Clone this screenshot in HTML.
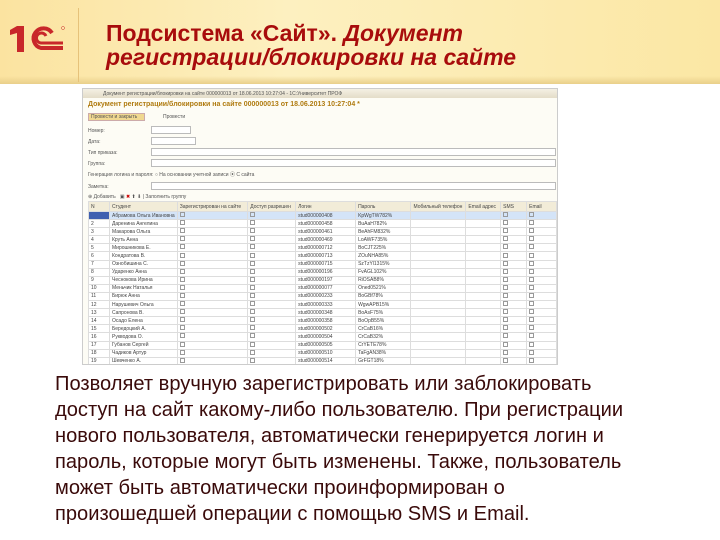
<!DOCTYPE html><html><head><meta charset="utf-8"><style>
*{margin:0;padding:0;box-sizing:border-box}
body{width:720px;height:540px;overflow:hidden;background:#fff;font-family:"Liberation Sans",sans-serif;position:relative}
.hdr{position:absolute;left:0;top:0;width:720px;height:84px;background:linear-gradient(90deg,#fbe3a0 0%,#fdf0c0 40%,#fbe7a4 100%)}
.hdr:after{content:"";position:absolute;left:0;right:0;bottom:0;height:8px;background:linear-gradient(#f3d88f00,#e9cf8a)}
.sep{position:absolute;left:78px;top:8px;width:1px;height:74px;background:#e6c27a}
.title{position:absolute;left:106px;top:21px;color:#a80c0c;font-size:23px;font-weight:bold;line-height:24px;white-space:nowrap}
.title i{font-style:italic}
.ss{position:absolute;left:82px;top:88px;width:476px;height:277px;background:#fdfcf5;border:1px solid #ccc;font-size:5px;color:#555;overflow:hidden}
.ss div{position:absolute}
.txt{position:absolute;left:55px;top:371px;font-size:20.1px;line-height:26px;color:#3a0a0a;white-space:nowrap}
table{position:absolute;left:5px;top:112px;border-collapse:collapse;font-size:5px;color:#444}
td{height:8.1px;border:1px solid #ddd;padding:0 2px;white-space:nowrap;overflow:hidden;background:#fff}
tr.h td{background:#f2ecd8;height:10px}
.cb{display:inline-block;width:5px;height:5px;border:1px solid #999}
</style></head><body>
<div class="hdr"></div><div class="sep"></div>
<svg style="position:absolute;left:8px;top:24px" width="60" height="30" viewBox="0 0 60 30">
<path d="M2 6 L9 2 H16 V28 H9 V9 L2 11Z" fill="#c8272a"/>
<path d="M44 9 A10 10 0 1 0 33 24 H55" fill="none" stroke="#c8272a" stroke-width="4"/>
<path d="M38 12 A5 5 0 1 0 33 19 H55" fill="none" stroke="#c8272a" stroke-width="3"/>
<circle cx="55" cy="4" r="1.5" fill="none" stroke="#c8272a" stroke-width=".5"/>
</svg>
<div class="title">Подсистема «Сайт». <i>Документ<br>регистрации/блокировки на сайте</i></div>
<div class="ss">
<div style="left:0;top:0;width:476px;height:9px;background:linear-gradient(#f4f0e4,#e4ddc8)"></div>
<div style="left:20px;top:2px">Документ регистрации/блокировки на сайте 000000013 от 18.06.2013 10:27:04 - 1С:Университет ПРОФ</div>
<div style="left:5px;top:12px;font-size:7px;font-weight:bold;color:#b07b10">Документ регистрации/блокировки на сайте 000000013 от 18.06.2013 10:27:04 *</div>
<div style="left:5px;top:24px;width:57px;height:8px;background:#f0d890;border:1px solid #caa;"></div>
<div style="left:8px;top:25px">Провести и закрыть</div><div style="left:80px;top:25px">Провести</div>
<div style="left:5px;top:39px">Номер:</div><div style="left:68px;top:37px;width:40px;height:8px;border:1px solid #bbb;background:#fff"></div>
<div style="left:5px;top:50px">Дата:</div><div style="left:68px;top:48px;width:45px;height:8px;border:1px solid #bbb;background:#fff"></div>
<div style="left:5px;top:61px">Тип приказа:</div><div style="left:68px;top:59px;width:405px;height:8px;border:1px solid #bbb;background:#fff"></div>
<div style="left:5px;top:72px">Группа:</div><div style="left:68px;top:70px;width:405px;height:8px;border:1px solid #bbb;background:#fff"></div>
<div style="left:5px;top:82px">Генерация логина и пароля: ○ На основании учетной записи ⦿ С сайта</div>
<div style="left:5px;top:95px">Заметка:</div><div style="left:68px;top:93px;width:405px;height:8px;border:1px solid #bbb;background:#fff"></div>
<div style="left:5px;top:105px">⊕ Добавить &nbsp; ▣ <span style="color:#c00">✖</span> ⬆ ⬇ | Заполнить группу</div>
<table>
<tr class="h"><td style="width:22px">N</td><td style="width:62px">Студент</td><td style="width:71px">Зарегистрирован на сайте</td><td style="width:48px">Доступ разрешен</td><td style="width:62px">Логин</td><td style="width:57px">Пароль</td><td style="width:55px">Мобильный телефон</td><td style="width:35px">Email адрес</td><td style="width:27px">SMS</td><td style="width:31px">Email</td></tr>
<tr><td style="background:#4060b0"></td><td style="background:#d4e4f8">Абрамова Ольга Ивановна</td><td style="background:#d4e4f8"><span class="cb"></span></td><td style="background:#d4e4f8"><span class="cb"></span></td><td style="background:#d4e4f8">stud000000408</td><td style="background:#d4e4f8">KpWgTW782%</td><td style="background:#d4e4f8"></td><td style="background:#d4e4f8"></td><td style="background:#d4e4f8"><span class="cb"></span></td><td style="background:#d4e4f8"><span class="cb"></span></td></tr>
<tr><td>2</td><td>Даренина Ангелина</td><td><span class="cb"></span></td><td><span class="cb"></span></td><td>stud000000458</td><td>BuAaH782%</td><td></td><td></td><td><span class="cb"></span></td><td><span class="cb"></span></td></tr>
<tr><td>3</td><td>Макарова Ольга</td><td><span class="cb"></span></td><td><span class="cb"></span></td><td>stud000000461</td><td>BeAhFM832%</td><td></td><td></td><td><span class="cb"></span></td><td><span class="cb"></span></td></tr>
<tr><td>4</td><td>Круть Анна</td><td><span class="cb"></span></td><td><span class="cb"></span></td><td>stud000000469</td><td>LoAWF735%</td><td></td><td></td><td><span class="cb"></span></td><td><span class="cb"></span></td></tr>
<tr><td>5</td><td>Мирошникова Е.</td><td><span class="cb"></span></td><td><span class="cb"></span></td><td>stud000000712</td><td>BoCJT225%</td><td></td><td></td><td><span class="cb"></span></td><td><span class="cb"></span></td></tr>
<tr><td>6</td><td>Кондратова В.</td><td><span class="cb"></span></td><td><span class="cb"></span></td><td>stud000000713</td><td>ZOuNHA85%</td><td></td><td></td><td><span class="cb"></span></td><td><span class="cb"></span></td></tr>
<tr><td>7</td><td>Ознобишина С.</td><td><span class="cb"></span></td><td><span class="cb"></span></td><td>stud000000715</td><td>SzTzYl1315%</td><td></td><td></td><td><span class="cb"></span></td><td><span class="cb"></span></td></tr>
<tr><td>8</td><td>Ударенко Анна</td><td><span class="cb"></span></td><td><span class="cb"></span></td><td>stud000000196</td><td>FvAGL102%</td><td></td><td></td><td><span class="cb"></span></td><td><span class="cb"></span></td></tr>
<tr><td>9</td><td>Чеснокова Ирина</td><td><span class="cb"></span></td><td><span class="cb"></span></td><td>stud000000197</td><td>RiOSAB8%</td><td></td><td></td><td><span class="cb"></span></td><td><span class="cb"></span></td></tr>
<tr><td>10</td><td>Меньчик Наталья</td><td><span class="cb"></span></td><td><span class="cb"></span></td><td>stud000000077</td><td>Oned0521%</td><td></td><td></td><td><span class="cb"></span></td><td><span class="cb"></span></td></tr>
<tr><td>11</td><td>Бирюк Анна</td><td><span class="cb"></span></td><td><span class="cb"></span></td><td>stud000000233</td><td>BoGBf78%</td><td></td><td></td><td><span class="cb"></span></td><td><span class="cb"></span></td></tr>
<tr><td>12</td><td>Нарушевич Ольга</td><td><span class="cb"></span></td><td><span class="cb"></span></td><td>stud000000333</td><td>WgwAPB15%</td><td></td><td></td><td><span class="cb"></span></td><td><span class="cb"></span></td></tr>
<tr><td>13</td><td>Сапронова В.</td><td><span class="cb"></span></td><td><span class="cb"></span></td><td>stud000000348</td><td>BoAsF75%</td><td></td><td></td><td><span class="cb"></span></td><td><span class="cb"></span></td></tr>
<tr><td>14</td><td>Осадо Елена</td><td><span class="cb"></span></td><td><span class="cb"></span></td><td>stud000000358</td><td>BoOpB55%</td><td></td><td></td><td><span class="cb"></span></td><td><span class="cb"></span></td></tr>
<tr><td>15</td><td>Бередоцкий А.</td><td><span class="cb"></span></td><td><span class="cb"></span></td><td>stud000000502</td><td>CrCaB16%</td><td></td><td></td><td><span class="cb"></span></td><td><span class="cb"></span></td></tr>
<tr><td>16</td><td>Рукводова О.</td><td><span class="cb"></span></td><td><span class="cb"></span></td><td>stud000000504</td><td>CrCaB32%</td><td></td><td></td><td><span class="cb"></span></td><td><span class="cb"></span></td></tr>
<tr><td>17</td><td>Губанов Сергей</td><td><span class="cb"></span></td><td><span class="cb"></span></td><td>stud000000505</td><td>CrYETE78%</td><td></td><td></td><td><span class="cb"></span></td><td><span class="cb"></span></td></tr>
<tr><td>18</td><td>Чадиков Артур</td><td><span class="cb"></span></td><td><span class="cb"></span></td><td>stud000000510</td><td>TaFgAN38%</td><td></td><td></td><td><span class="cb"></span></td><td><span class="cb"></span></td></tr>
<tr><td>19</td><td>Шевченко А.</td><td><span class="cb"></span></td><td><span class="cb"></span></td><td>stud000000514</td><td>GrFGT18%</td><td></td><td></td><td><span class="cb"></span></td><td><span class="cb"></span></td></tr>
</table>
</div>
<div class="txt">Позволяет вручную зарегистрировать или заблокировать<br>доступ на сайт какому-либо пользователю. При регистрации<br>нового пользователя, автоматически генерируется логин и<br>пароль, которые могут быть изменены. Также, пользователь<br>может быть автоматически проинформирован о<br>произошедшей операции с помощью SMS и Email.</div>
</body></html>
